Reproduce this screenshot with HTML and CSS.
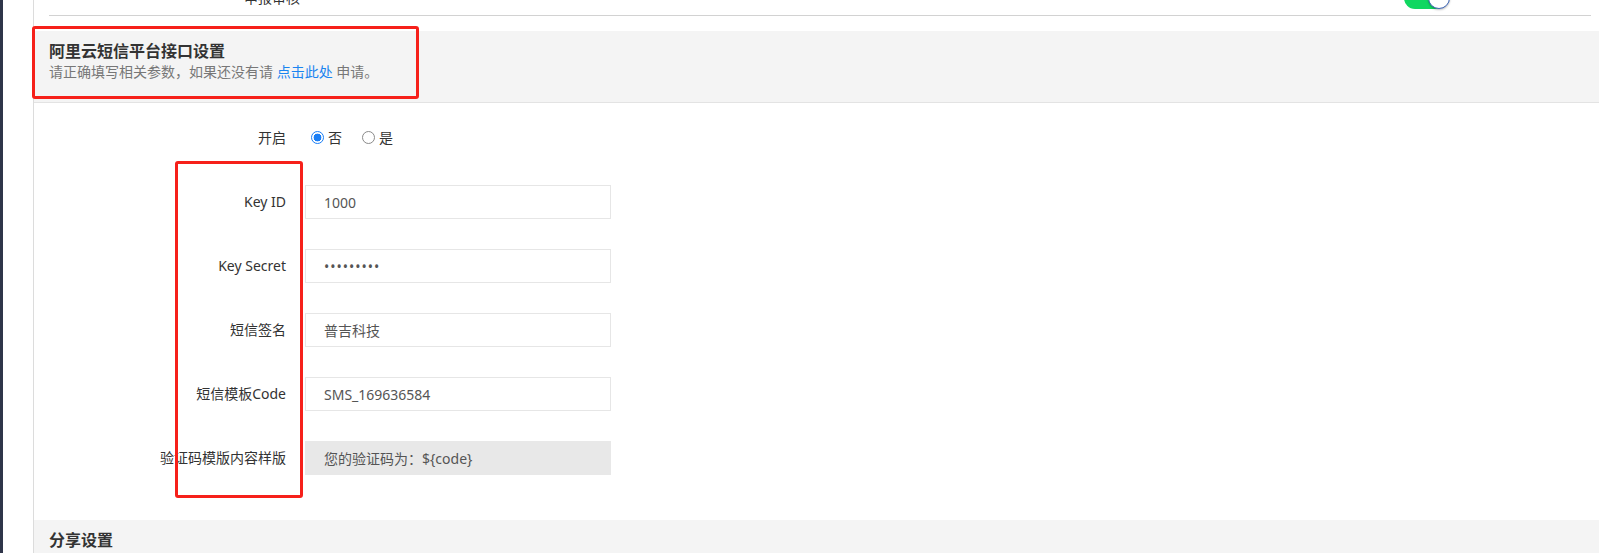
FILE: index.html
```html
<!DOCTYPE html>
<html lang="zh-CN">
<head>
<meta charset="utf-8">
<title>短信设置</title>
<link rel="stylesheet" href="styles.css">
</head>
<body>
<div class="page">
  <aside class="rail"></aside>
  <div class="gutter"></div>
  <main class="main">
    <div class="prev-row">
      <div class="prev-item">
        <span class="prev-label">申报审核</span>
        <span class="toggle"><span class="knob"></span></span>
      </div>
    </div>

    <section class="panel">
      <header class="panel-head">
        <h2 class="panel-title">阿里云短信平台接口设置</h2>
        <p class="panel-desc">请正确填写相关参数，如果还没有请 <a class="link" href="#">点击此处</a> 申请。</p>
      </header>
      <form class="form">
        <div class="row row-radio">
          <span class="label">开启</span>
          <div class="radios">
            <label class="opt"><input class="radio" type="radio" name="on" checked><span>否</span></label>
            <label class="opt"><input class="radio" type="radio" name="on"><span>是</span></label>
          </div>
        </div>
        <div class="row">
          <span class="label">Key ID</span>
          <input class="field" type="text" value="1000">
        </div>
        <div class="row">
          <span class="label">Key Secret</span>
          <input class="field field-secret" type="password" value="123456789">
        </div>
        <div class="row">
          <span class="label">短信签名</span>
          <input class="field" type="text" value="普吉科技">
        </div>
        <div class="row">
          <span class="label">短信模板Code</span>
          <input class="field" type="text" value="SMS_169636584">
        </div>
        <div class="row">
          <span class="label">验证码模版内容样版</span>
          <input class="field field-disabled" type="text" value="您的验证码为：${code}" disabled>
        </div>
      </form>
    </section>

    <section class="panel">
      <header class="panel-head">
        <h2 class="panel-title">分享设置</h2>
      </header>
    </section>
  </main>

  <div class="mark mark-head"></div>
  <div class="mark mark-labels"></div>
</div>
</body>
</html>
```

FILE: styles.css
```css
* { box-sizing: border-box; }

html, body {
  margin: 0;
  padding: 0;
  background: #fff;
}

body {
  font-family: "Noto Sans", "Noto Sans CJK SC", sans-serif;
  font-size: 14px;
  color: #333;
}

.page {
  position: relative;
  display: flex;
  width: 1599px;
  height: 553px;
  overflow: hidden;
}

.rail {
  width: 3px;
  flex: none;
  background: #2f3549;
}

.gutter {
  width: 30px;
  flex: none;
  background: #fff;
}

.main {
  flex: 1;
  min-width: 0;
  border-left: 1px solid #dcdcdc;
}

/* previous (clipped) form row */
.prev-row {
  display: flex;
  align-items: flex-start;
  height: 16px;
  margin: 0 8px 15px 15px;
  border-bottom: 1px solid #d2d2d2;
}

.prev-item {
  display: flex;
  align-items: center;
  height: 34px;
  margin-top: -19px;
}

.prev-label {
  width: 251px;
  text-align: right;
  line-height: 20px;
}

.toggle {
  display: flex;
  justify-content: flex-end;
  align-items: center;
  width: 42px;
  height: 22px;
  margin-left: 1104px;
  border-radius: 11px;
  background: #10d760;
}

.knob {
  width: 22px;
  height: 22px;
  border-radius: 50%;
  background: #fff;
  border: 1px solid #3b63b5;
  box-shadow: 0 1px 2px rgba(0,0,0,0.25);
  margin-right: -4px;
}

/* panels */
.panel-head {
  background: #f4f4f4;
  padding: 9px 15px 20px;
  border-bottom: 1px solid #e3e3e3;
}

.panel-title {
  margin: 0;
  font-size: 16px;
  font-weight: bold;
  line-height: 22px;
  color: #333;
}

.panel-desc {
  margin: 0;
  font-size: 14px;
  line-height: 20px;
  color: #777;
}

.link {
  color: #1a84f0;
  text-decoration: none;
}

/* form */
.form {
  display: flex;
  flex-direction: column;
  gap: 30px;
  padding: 17px 0 45px;
}

.row {
  display: grid;
  grid-template-columns: 252px 306px;
  column-gap: 19px;
  align-items: center;
  height: 34px;
}

.row-radio {
  height: 35px;
}

.label {
  text-align: right;
  line-height: 20px;
  color: #333;
  white-space: nowrap;
}

.radios {
  display: flex;
  align-items: center;
  gap: 20px;
  padding-left: 6px;
}

.opt {
  display: inline-flex;
  align-items: center;
  gap: 4px;
  line-height: 20px;
  color: #333;
}

.radio {
  appearance: none;
  -webkit-appearance: none;
  margin: 0;
  width: 13px;
  height: 13px;
  border-radius: 50%;
  border: 1px solid #8a8a8a;
  background: #fff;
}

.radio:checked {
  border-color: #1a7ef5;
  background: radial-gradient(circle, #1a7ef5 0 3.6px, #fff 4.2px);
}

.field {
  height: 34px;
  width: 306px;
  margin: 0;
  padding: 0 18px;
  border: 1px solid #e6e6e6;
  border-radius: 0;
  background: #fff;
  font-family: "Noto Sans", "Noto Sans CJK SC", sans-serif;
  font-size: 14px;
  color: #555;
  outline: none;
}

.field-secret {
  letter-spacing: 1px;
}

.field-disabled {
  background: #e8e8e8;
  border-color: #e8e8e8;
  color: #555;
  -webkit-text-fill-color: #555;
  opacity: 1;
}

/* red annotation boxes drawn over the screenshot */
.mark {
  position: absolute;
  border: 3px solid #f6201a;
  border-radius: 3px;
  pointer-events: none;
}

.mark-head {
  left: 32px;
  top: 26px;
  width: 387px;
  height: 73px;
}

.mark-labels {
  left: 175px;
  top: 161px;
  width: 128px;
  height: 337px;
}
```
